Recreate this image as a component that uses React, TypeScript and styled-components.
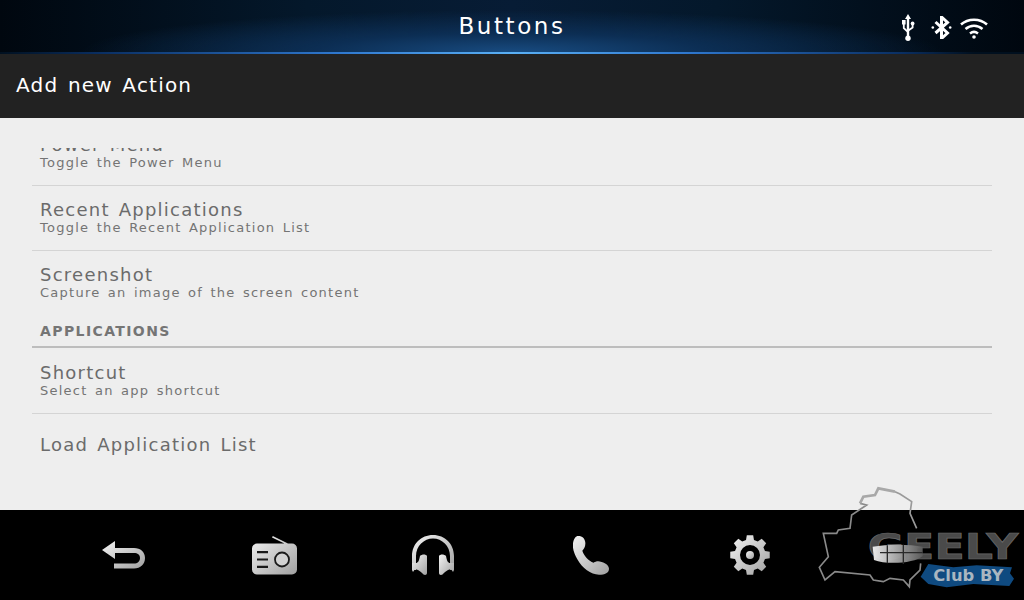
import React from 'react'
import styled, { createGlobalStyle } from 'styled-components'

const GlobalStyle = createGlobalStyle`
  html, body {
    margin: 0;
    padding: 0;
    background: #000;
  }
`

const systemRows = [
  { title: 'Power Menu', sub: 'Toggle the Power Menu' },
  { title: 'Recent Applications', sub: 'Toggle the Recent Application List' },
  { title: 'Screenshot', sub: 'Capture an image of the screen content' },
]

// 8 teeth round a ring, clockwise from the top
const gearPath = () => {
  const points: string[] = []
  for (let i = 0; i < 8; i++) {
    const a = (i * Math.PI) / 4 - Math.PI / 2
    const pt = (r: number, off: number) =>
      `${(20 + r * Math.cos(a + off)).toFixed(2)} ${(20 + r * Math.sin(a + off)).toFixed(2)}`
    points.push(pt(15.5, -0.26), pt(20, -0.16), pt(20, 0.16), pt(15.5, 0.26))
  }
  return `M${points.join('L')}Z`
}

const IconGradient = () => (
  <svg width="0" height="0" style={{ position: 'absolute' }}>
    <defs>
      <linearGradient id="chrome" x1="0" y1="0" x2="1" y2="1">
        <stop offset="0" stopColor="#f4f4f4" />
        <stop offset="1" stopColor="#a0a0a0" />
      </linearGradient>
      <linearGradient id="emblem" x1="0" y1="0" x2="1" y2="0">
        <stop offset="0" stopColor="#f2f2f2" />
        <stop offset="1" stopColor="#5c5c5c" />
      </linearGradient>
    </defs>
  </svg>
)

const UsbIcon = () => (
  <svg width="16" height="27" viewBox="0 0 16 27">
    <path d="M8 0l3 5H9.200v17H6.800V5H5z" fill="#fff" />
    <circle cx="8" cy="24.300" r="2.700" fill="#fff" />
    <rect x="2" y="6" width="3.600" height="4.500" fill="#fff" />
    <circle cx="12.600" cy="9.500" r="1.900" fill="#fff" />
    <path d="M3.800 10v4.200L8 18M12.600 11v2.600L8 16.800" fill="none" stroke="#fff" strokeWidth="1.800" />
  </svg>
)

const BluetoothIcon = () => (
  <svg width="30" height="23" viewBox="-9 0 30 23">
    <path d="M3.500 6l12 11-6 5.500V1l6 5.500-12 10.500" fill="none" stroke="#fff" strokeWidth="3" />
    <circle cx="0.800" cy="11.500" r="1.300" fill="#fff" />
    <circle cx="18.200" cy="11.500" r="1.300" fill="#fff" />
  </svg>
)

const WifiIcon = () => (
  <svg width="28" height="22" viewBox="0 0 28 22" fill="none" stroke="#fff" strokeWidth="2.500">
    <path d="M1 7.500C8 1 20 1 27 7.500" />
    <path d="M5.500 12C10.500 7.500 17.500 7.500 22.500 12" />
    <path d="M10 16.500C12.500 14.500 15.500 14.500 18 16.500" />
    <circle cx="14" cy="20" r="1.800" fill="#fff" stroke="none" />
  </svg>
)

const BackIcon = () => (
  <svg width="44" height="28" viewBox="0 0 44 28">
    <path
      d="M13 0V7H32C38.600 7 43 11 43 17S38.600 27.500 32 27.500H12V22.500H32C35.600 22.500 38 20.500 38 17S35.600 12 32 12H13V18L0 9Z"
      fill="url(#chrome)"
    />
  </svg>
)

const RadioIcon = () => (
  <svg width="45" height="39" viewBox="0 0 45 39">
    <path
      d="M20 1.600L20.800 0 36 7.600H40A5 5 0 0 1 45 12.600V33.500A5 5 0 0 1 40 38.500H5A5 5 0 0 1 0 33.500V12.600A5 5 0 0 1 5 7.600H32.400Z"
      fill="url(#chrome)"
    />
    <circle cx="30" cy="23.500" r="7" fill="#d2d2d2" stroke="#1a1a1a" strokeWidth="1.800" />
    <path d="M5 15h11v2.200H5zM5 22.400h11v2.200H5zM5 29.800h11v2.200H5z" fill="#1a1a1a" />
  </svg>
)

const HeadphonesIcon = () => (
  <svg width="42" height="41" viewBox="0 0 42 41" fill="url(#chrome)">
    <path d="M0 21C0 9 9 0 21 0S42 9 42 21V35H38V21C38 11 30 3.500 21 3.500S4 11 4 21V35H0Z" />
    <path d="M8 21C10 19 14 19 15 21V38C15 40 13 40.500 11.500 39.500C10 38 8 36 6 35L3 34L1 37L0 35V28L4 28C6 28 7 26 8 21Z" />
    <path d="M34 21C32 19 28 19 27 21V38C27 40 29 40.500 30.500 39.500C32 38 34 36 36 35L39 34L41 37L42 35V28L38 28C36 28 35 26 34 21Z" />
  </svg>
)

const PhoneIcon = () => (
  <svg width="36" height="39" viewBox="72 48 108 117">
    <path
      d="M88 48C100 48 108 56 109 68C110 80 104 88 100 92C105 108 118 122 134 128C140 124 148 122 158 126C172 130 180 138 180 146C180 158 168 164 150 164C125 164 100 145 85 118C75 100 70 85 72 70C74 56 80 48 88 48Z"
      fill="url(#chrome)"
    />
  </svg>
)

const GearIcon = () => (
  <svg width="40" height="40" viewBox="0 0 40 40">
    <path
      fillRule="evenodd"
      d={`${gearPath()}M20 10a10 10 0 1 0 0 20a10 10 0 1 0 0-20Z`}
      fill="url(#chrome)"
    />
    <circle cx="20" cy="20" r="4" fill="url(#chrome)" />
  </svg>
)

// coordinates follow a 3x crop of the watermark, so the viewBox is 3x its size
const ClubLogo = () => (
  <LogoWrap>
    <svg width="224" height="120" viewBox="0 0 672 360">
      <path
        d="M180 70L200 75L155 105L150 145L115 150L110 160L70 160L85 230L58 262L75 300L105 275L210 285L220 300L250 305L270 295L310 300L328 320L330 300L360 270L362 250"
        fill="none"
        stroke="#8a8a8a"
        strokeWidth="5"
      />
      <path d="M285 35L300 42L335 65L330 100L350 145" fill="none" stroke="#9a9a9a" strokeWidth="5" />
      <path d="M180 70L190 50L225 45L235 25L285 35" fill="none" stroke="#a8a8a8" strokeWidth="8" />
      <LogoTitle x="203" y="238" textLength="452" lengthAdjust="spacingAndGlyphs">
        GEELY
      </LogoTitle>
      <path
        d="M218 200C260 192 330 192 368 200V228C345 250 260 255 222 240Z"
        fill="url(#emblem)"
        opacity="0.95"
      />
      <path d="M240 218H368M262 196V250M310 194V252" stroke="#2a2a2a" strokeWidth="4" fill="none" />
      <path
        d="M385 252L460 262L530 256L636 262L630 280L642 296L628 318L520 312L440 322L385 312L362 290Z"
        fill="#0f4a80"
      />
      <LogoBadge x="400" y="304" textLength="210" lengthAdjust="spacingAndGlyphs">
        Club BY
      </LogoBadge>
    </svg>
  </LogoWrap>
)

export default function App() {
  return (
    <Screen>
      <GlobalStyle />
      <IconGradient />
      <StatusBar>
        <ScreenTitle>Buttons</ScreenTitle>
        <StatusIcons>
          <UsbIcon />
          <BluetoothIcon />
          <WifiIcon />
        </StatusIcons>
      </StatusBar>
      <ActionBar>Add new Action</ActionBar>
      <Content>
        <Scroller>
          {systemRows.map((row, i) => (
            <Row key={row.title} $clipped={i === 0} $plain={i === systemRows.length - 1}>
              <RowTitle>{row.title}</RowTitle>
              <RowSub>{row.sub}</RowSub>
            </Row>
          ))}
          <SectionHeader>APPLICATIONS</SectionHeader>
          <Row>
            <RowTitle>Shortcut</RowTitle>
            <RowSub>Select an app shortcut</RowSub>
          </Row>
          <SingleRow>
            <RowTitle>Load Application List</RowTitle>
          </SingleRow>
        </Scroller>
      </Content>
      <NavBar>
        <BackIcon />
        <RadioIcon />
        <HeadphonesIcon />
        <PhoneIcon />
        <GearIcon />
      </NavBar>
      <ClubLogo />
    </Screen>
  )
}

const Screen = styled.div`
  position: relative;
  width: 1024px;
  height: 600px;
  display: flex;
  flex-direction: column;
  overflow: hidden;
  font-family: 'DejaVu Sans', sans-serif;
`

const StatusBar = styled.header`
  position: relative;
  flex: none;
  height: 52px;
  display: flex;
  align-items: center;
  justify-content: center;
  background: radial-gradient(ellipse 430px 42px at 50% 100%, #184b80 0%, #0c2e54 45%, transparent 100%),
    linear-gradient(90deg, #00070f 0%, #04182b 30%, #071c35 50%, #04182b 70%, #00070f 100%);
  border-bottom: 2px solid;
  border-image: linear-gradient(90deg, #01101f 0%, #0a2f63 10%, #2f78cf 33%, #5ab0f5 50%, #2f78cf 67%, #0a2f63 88%, #01101f 95%) 1;
`

const ScreenTitle = styled.h1`
  margin: 0;
  font-size: 23px;
  font-weight: 400;
  letter-spacing: 2.600px;
  color: #fff;
`

const StatusIcons = styled.div`
  position: absolute;
  top: 14px;
  right: 36px;
  height: 27px;
  display: flex;
  align-items: center;
  gap: 7px;
`

const ActionBar = styled.div`
  flex: none;
  box-sizing: border-box;
  height: 64px;
  padding: 0 16px 2px;
  display: flex;
  align-items: center;
  background: #222;
  color: #fff;
  font-size: 20px;
  letter-spacing: 1.200px;
  word-spacing: 2px;
`

const Content = styled.main`
  flex: 1;
  min-height: 0;
  padding: 30px 32px 0;
  background: #eee;
`

const Scroller = styled.div`
  height: 362px;
  overflow: hidden;
`

const Row = styled.div<{ $clipped?: boolean; $plain?: boolean }>`
  box-sizing: border-box;
  height: 65px;
  padding: 14px 8px 0;
  margin-top: ${({ $clipped }) => ($clipped ? '-27px' : '0')};
  border-bottom: ${({ $plain }) => ($plain ? 'none' : '1px solid #d4d4d4')};
`

const SingleRow = styled.div`
  padding: 21px 8px 0;
`

const RowTitle = styled.div`
  font-size: 18px;
  line-height: 20px;
  letter-spacing: 1.250px;
  word-spacing: 2px;
  color: #6b6b6b;
`

const RowSub = styled.div`
  font-size: 13px;
  line-height: 15px;
  letter-spacing: 1.250px;
  word-spacing: 2px;
  color: #747474;
`

const SectionHeader = styled.div`
  box-sizing: border-box;
  height: 32px;
  margin-bottom: 1px;
  padding: 0 8px;
  border-bottom: 2px solid #bdbdbd;
  font-size: 14px;
  line-height: 30px;
  font-weight: 700;
  letter-spacing: 1.400px;
  color: #757575;
`

const NavBar = styled.nav`
  flex: none;
  height: 90px;
  padding-left: 44px;
  display: grid;
  grid-template-columns: 160px 140px 178px 138px 180px;
  justify-items: center;
  align-items: center;
  background: #000;
`

const LogoWrap = styled.div`
  position: absolute;
  left: 800px;
  top: 480px;
  width: 224px;
  height: 120px;
`

const LogoTitle = styled.text`
  font-family: 'DejaVu Sans', sans-serif;
  font-size: 108px;
  font-weight: 700;
  fill: #4a4a4a;
  stroke: #6a6a6a;
  stroke-width: 2px;
`

const LogoBadge = styled.text`
  font-family: 'DejaVu Sans', sans-serif;
  font-size: 48px;
  font-weight: 700;
  fill: #aab6c0;
`
